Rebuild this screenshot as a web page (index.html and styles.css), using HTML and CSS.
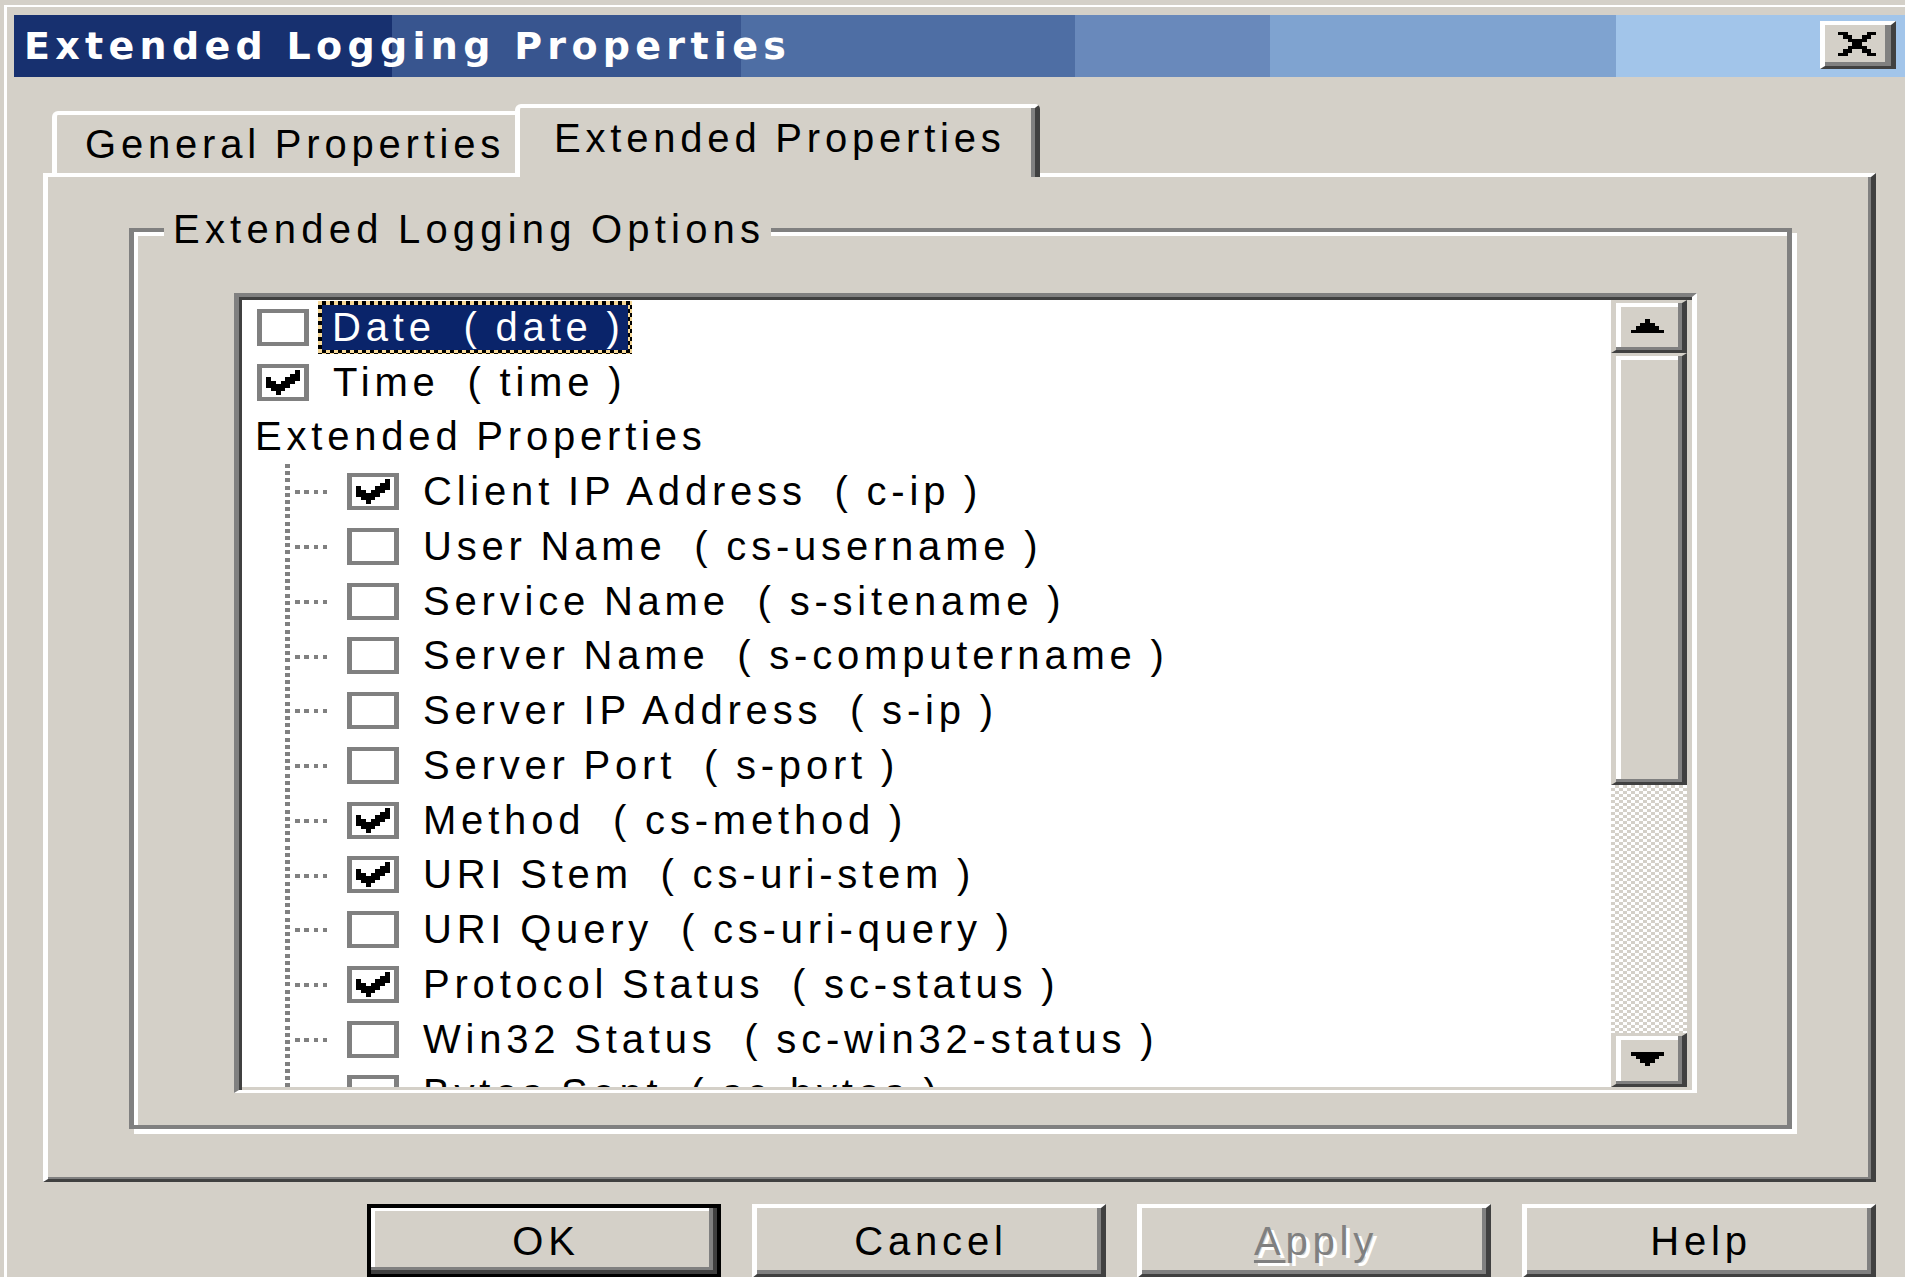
FILE: index.html
```html
<!DOCTYPE html>
<html lang="en">
<head>
<meta charset="utf-8">
<title>Extended Logging Properties</title>
<link rel="stylesheet" href="styles.css">
</head>
<body>
<div class="window">
  <div class="titlebar">
    <span class="title">Extended Logging Properties</span>
    <span class="close" role="button" aria-label="Close">
      <svg class="close-x" viewBox="0 0 8 7" preserveAspectRatio="none" shape-rendering="crispEdges">
        <rect x="0" y="0" width="2" height="1"/><rect x="6" y="0" width="2" height="1"/>
        <rect x="1" y="1" width="2" height="1"/><rect x="5" y="1" width="2" height="1"/>
        <rect x="2" y="2" width="4" height="1"/>
        <rect x="3" y="3" width="2" height="1"/>
        <rect x="2" y="4" width="4" height="1"/>
        <rect x="1" y="5" width="2" height="1"/><rect x="5" y="5" width="2" height="1"/>
        <rect x="0" y="6" width="2" height="1"/><rect x="6" y="6" width="2" height="1"/>
      </svg>
    </span>
  </div>

  <div class="client">
    <div class="tabs">
      <div class="tab">General Properties</div>
      <div class="tab active">Extended Properties</div>
    </div>

    <div class="panel">
      <div class="group">
        <span class="legend">Extended Logging Options</span>
        <div class="listbox">
          <div class="items">
            <div class="row top">
              <span class="cb"></span>
              <span class="lbl focus">Date  ( date )</span>
            </div>
            <div class="row top">
              <span class="cb on"><svg class="tick" viewBox="0 0 7 7" preserveAspectRatio="none" shape-rendering="crispEdges"><path d="M6 0h1v1h-1zM5 1h2v1h-2zM0 2h1v1h-1zM4 2h3v1h-3zM0 3h2v1h-2zM3 3h3v1h-3zM0 4h5v1h-5zM1 5h3v1h-3zM2 6h1v1h-1z"/></svg></span>
              <span class="lbl">Time  ( time )</span>
            </div>
            <div class="row header">Extended Properties</div>
            <div class="children">
              <div class="row sub">
                <span class="cb on"><svg class="tick" viewBox="0 0 7 7" preserveAspectRatio="none" shape-rendering="crispEdges"><path d="M6 0h1v1h-1zM5 1h2v1h-2zM0 2h1v1h-1zM4 2h3v1h-3zM0 3h2v1h-2zM3 3h3v1h-3zM0 4h5v1h-5zM1 5h3v1h-3zM2 6h1v1h-1z"/></svg></span>
                <span class="lbl">Client IP Address  ( c-ip )</span>
              </div>
              <div class="row sub">
                <span class="cb"></span>
                <span class="lbl">User Name  ( cs-username )</span>
              </div>
              <div class="row sub">
                <span class="cb"></span>
                <span class="lbl">Service Name  ( s-sitename )</span>
              </div>
              <div class="row sub">
                <span class="cb"></span>
                <span class="lbl">Server Name  ( s-computername )</span>
              </div>
              <div class="row sub">
                <span class="cb"></span>
                <span class="lbl">Server IP Address  ( s-ip )</span>
              </div>
              <div class="row sub">
                <span class="cb"></span>
                <span class="lbl">Server Port  ( s-port )</span>
              </div>
              <div class="row sub">
                <span class="cb on"><svg class="tick" viewBox="0 0 7 7" preserveAspectRatio="none" shape-rendering="crispEdges"><path d="M6 0h1v1h-1zM5 1h2v1h-2zM0 2h1v1h-1zM4 2h3v1h-3zM0 3h2v1h-2zM3 3h3v1h-3zM0 4h5v1h-5zM1 5h3v1h-3zM2 6h1v1h-1z"/></svg></span>
                <span class="lbl">Method  ( cs-method )</span>
              </div>
              <div class="row sub">
                <span class="cb on"><svg class="tick" viewBox="0 0 7 7" preserveAspectRatio="none" shape-rendering="crispEdges"><path d="M6 0h1v1h-1zM5 1h2v1h-2zM0 2h1v1h-1zM4 2h3v1h-3zM0 3h2v1h-2zM3 3h3v1h-3zM0 4h5v1h-5zM1 5h3v1h-3zM2 6h1v1h-1z"/></svg></span>
                <span class="lbl">URI Stem  ( cs-uri-stem )</span>
              </div>
              <div class="row sub">
                <span class="cb"></span>
                <span class="lbl">URI Query  ( cs-uri-query )</span>
              </div>
              <div class="row sub">
                <span class="cb on"><svg class="tick" viewBox="0 0 7 7" preserveAspectRatio="none" shape-rendering="crispEdges"><path d="M6 0h1v1h-1zM5 1h2v1h-2zM0 2h1v1h-1zM4 2h3v1h-3zM0 3h2v1h-2zM3 3h3v1h-3zM0 4h5v1h-5zM1 5h3v1h-3zM2 6h1v1h-1z"/></svg></span>
                <span class="lbl">Protocol Status  ( sc-status )</span>
              </div>
              <div class="row sub">
                <span class="cb"></span>
                <span class="lbl">Win32 Status  ( sc-win32-status )</span>
              </div>
              <div class="row sub">
                <span class="cb"></span>
                <span class="lbl">Bytes Sent  ( sc-bytes )</span>
              </div>
            </div>
          </div>

          <div class="scrollbar">
            <div class="sb-btn">
              <svg class="arrow" viewBox="0 0 7 4" preserveAspectRatio="none" shape-rendering="crispEdges"><path d="M3 0h1v1h-1zM2 1h3v1h-3zM1 2h5v1h-5zM0 3h7v1h-7z"/></svg>
            </div>
            <div class="sb-thumb"></div>
            <div class="sb-track"></div>
            <div class="sb-btn down">
              <svg class="arrow" viewBox="0 0 7 4" preserveAspectRatio="none" shape-rendering="crispEdges"><path d="M0 0h7v1h-7zM1 1h5v1h-5zM2 2h3v1h-3zM3 3h1v1h-1z"/></svg>
            </div>
          </div>
        </div>
      </div>
    </div>

    <div class="buttons">
      <span class="btn default">OK</span>
      <span class="btn">Cancel</span>
      <span class="btn disabled"><u>A</u>pply</span>
      <span class="btn">Help</span>
    </div>
  </div>
</div>
</body>
</html>
```

FILE: styles.css
```css
* { box-sizing: border-box; }

html, body {
  margin: 0;
  height: 100%;
  overflow: hidden;
  background: #d4d0c8;
}

body {
  font-family: "Liberation Sans", Arial, sans-serif;
  font-size: 40px;
  letter-spacing: 4.8px;
  word-spacing: -2px;
  color: #000;
}

/* window frame */
.window {
  margin: 5px 0 0 4px;
  border-top: 2px solid #fff;
  border-left: 3px solid #fff;
  padding: 8px 0 0 7px;
  height: 1272px;
}

/* caption */
.titlebar {
  height: 62px;
  display: flex;
  align-items: center;
  padding-left: 10px;
  background: linear-gradient(to right,
    #17306f 0 378px,
    #38558f 378px 727px,
    #4e6ea4 727px 1061px,
    #6989bb 1061px 1256px,
    #7fa3d0 1256px 1602px,
    #a2c5ea 1602px);
}

.title {
  font-family: "DejaVu Sans", Verdana, sans-serif;
  font-weight: bold;
  font-size: 38px;
  letter-spacing: 5.3px;
  word-spacing: 0;
  line-height: 40px;
  color: #fff;
  white-space: pre;
}

.close {
  margin-left: auto;
  margin-right: 9px;
  margin-top: -2px;
  width: 76px;
  height: 48px;
  display: flex;
  align-items: center;
  justify-content: center;
  background: #d4d0c8;
  border-style: solid;
  border-width: 4px 5px 3px 5px;
  border-color: #fff #404040 #404040 #fff;
  box-shadow: inset -6px -4px 0 #808080;
}

.close-x {
  width: 38px;
  height: 24px;
  margin: -4px 0 0 -2px;
  fill: #000;
}

/* dialog body */
.client {
  padding-left: 29px;
}

.tabs {
  margin-top: 27px;
  height: 69px;
  display: flex;
  align-items: flex-end;
}

.tab {
  line-height: 46px;
  white-space: pre;
  background: #d4d0c8;
}

.tab:first-child {
  margin-left: 9px;
  width: 463px;
  height: 62px;
  border-top: 4px solid #fff;
  border-left: 5px solid #fff;
  border-top-left-radius: 6px;
  padding: 6px 0 0 28px;
}

.tab.active {
  position: relative;
  z-index: 1;
  width: 525px;
  height: 73px;
  margin-bottom: -4px;
  border-top: 4px solid #fff;
  border-left: 5px solid #fff;
  border-right: 5px solid #404040;
  border-top-left-radius: 6px;
  border-top-right-radius: 5px;
  box-shadow: inset -4px 0 0 #808080;
  padding: 7px 0 0 34px;
}

.panel {
  width: 1833px;
  height: 1009px;
  border-style: solid;
  border-width: 4px 5px 3px 5px;
  border-color: #fff #404040 #404040 #fff;
  box-shadow: inset -3px -2px 0 #808080;
  padding: 51px 0 0 81px;
}

/* etched group box */
.group {
  position: relative;
  width: 1663px;
  height: 901px;
  border-style: solid;
  border-width: 4px 5px;
  border-color: #808080;
  box-shadow: inset 4px 4px 0 #fff, 5px 5px 0 #fff;
  padding: 61px 0 0 100px;
}

.legend {
  position: absolute;
  left: 30px;
  top: -26px;
  padding: 0 6px 0 9px;
  line-height: 46px;
  letter-spacing: 5.2px;
  background: #d4d0c8;
  white-space: pre;
}

/* sunken list with checkboxes */
.listbox {
  width: 1463px;
  height: 800px;
  display: flex;
  background: #fff;
  border-style: solid;
  border-width: 4px 5px 3px 5px;
  border-color: #808080 #fff #fff #808080;
  box-shadow: inset 3px 3px 0 #404040, inset -5px -3px 0 #d4d0c8;
  padding: 3px 5px 3px 3px;
}

.items {
  flex: 1;
  overflow: hidden;
}

.row {
  height: 54.75px;
  display: flex;
  align-items: center;
  white-space: pre;
}

.row.top { padding-left: 15px; }
.row.header { padding-left: 13px; line-height: 45px; }

.children {
  background: repeating-linear-gradient(to bottom, #808080 0 4px, transparent 4px 7.2px) no-repeat 43px 0 / 5px 100%;
}

.row.sub {
  padding-left: 105px;
  background: repeating-linear-gradient(to right, #808080 0 4.5px, transparent 4.5px 9.3px) no-repeat 53px 26px / 33px 4px;
}

.cb {
  flex-shrink: 0;
  width: 52px;
  height: 37px;
  border-style: solid;
  border-width: 4px 5px;
  border-color: #808080;
  background: #fff;
  display: flex;
  align-items: center;
  justify-content: center;
}

.tick {
  width: 34px;
  height: 25px;
  fill: #000;
}

.lbl {
  margin-left: 9px;
  line-height: 45px;
  border: 4px solid transparent;
  padding: 0 5px 0 11px;
}

.lbl.focus {
  color: #fff;
  padding: 0 3px 0 10px;
  background:
    linear-gradient(#0a246a, #0a246a) padding-box,
    repeating-conic-gradient(#000 0 25%, #f5d898 0 50%) 0 0 / 8px 8px border-box;
}

/* vertical scroll bar */
.scrollbar {
  width: 76px;
  flex-shrink: 0;
  display: flex;
  flex-direction: column;
}

.sb-btn,
.sb-thumb {
  background: #d4d0c8;
  border-style: solid;
  border-width: 3px 5px 3px 5px;
  border-color: #d4d0c8 #404040 #404040 #d4d0c8;
  box-shadow: inset -4px -3px 0 #808080, inset 5px 4px 0 #fff;
}

.sb-btn {
  height: 53px;
  display: flex;
  align-items: center;
  justify-content: center;
}

.sb-btn.down { height: 54px; }

.sb-thumb { height: 432px; }

.sb-track {
  flex: 1;
  background: repeating-conic-gradient(#d4d0c8 0 25%, #fff 0 50%) 0 0 / 8px 6px;
}

.arrow {
  width: 33px;
  height: 14px;
  margin: -2px 0 0 -4px;
  fill: #000;
}

/* command buttons */
.buttons {
  width: 1833px;
  margin-top: 22px;
  display: flex;
  justify-content: flex-end;
  gap: 31px;
}

.btn {
  width: 354px;
  height: 74px;
  display: flex;
  align-items: center;
  justify-content: center;
  padding-left: 4px;
  background: #d4d0c8;
  border-style: solid;
  border-width: 4px 5px 4px 5px;
  border-color: #fff #404040 #404040 #fff;
  box-shadow: inset -4px -4px 0 #808080;
  white-space: pre;
}

.btn.default {
  border: 4px solid #000;
  box-shadow: inset -4px -4px 0 #404040, inset -8px -7px 0 #808080, inset 4px 3px 0 #fff;
}

.btn.disabled {
  color: #808080;
  text-shadow: 4px 3px 0 #fff;
}

.btn u {
  text-decoration-thickness: 3px;
  text-underline-offset: 5px;
}
```
